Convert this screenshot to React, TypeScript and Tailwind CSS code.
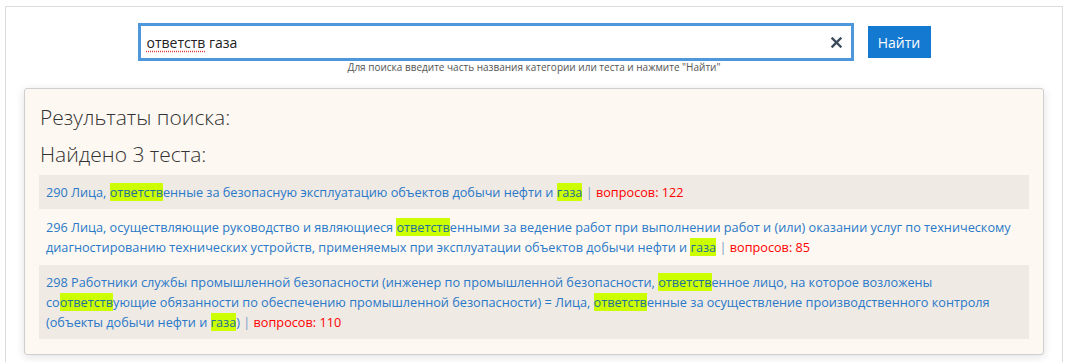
import React from "react";

const H = ({ children }: { children: React.ReactNode }) => (
  <span className="bg-[#ccff00] text-[#1f6f9a]">{children}</span>
);

const Count = ({ n }: { n: number }) => (
  <>
    {" "}
    <span className="text-[#7a9cc6]">|</span>{" "}
    <span className="text-[#ff0000]">вопросов: {n}</span>
  </>
);

export default function App() {
  return (
    <div
      className="h-[362px] overflow-hidden bg-white pl-[5px] pr-[5px] pt-[6px]"
      style={{ fontFamily: '"Open Sans", "Noto Sans", sans-serif' }}
    >
      <div className="h-full border-x border-t border-[#dcdcdc] bg-white">
        <div className="flex flex-col items-center pt-[16px]">
          <div className="flex items-center gap-[14px]">
            <div className="flex h-[38px] w-[716px] items-center justify-between border-[3px] border-[#4f97dc] bg-white pl-[6px] pr-[8px]">
              <span className="text-[14px] text-[#222]">
                <span className="underline decoration-[#e53935] decoration-dotted underline-offset-[3px]">
                  ответств
                </span>{" "}
                газа
              </span>
              <svg width="11" height="11" viewBox="0 0 11 11" className="mr-[1px]">
                <path d="M1.5 1.5 L9.5 9.5 M9.5 1.5 L1.5 9.5" stroke="#3c4b5c" strokeWidth="2.4" strokeLinecap="square" />
              </svg>
            </div>
            <button className="flex h-[32px] w-[63px] items-center justify-center bg-[#1479d1] text-[14px] text-white">
              Найти
            </button>
          </div>
          <div className="mt-[-1px] text-[10px] leading-[14px] text-[#555]">
            Для поиска введите часть названия категории или теста и нажмите "Найти"
          </div>
        </div>

        <div className="mx-[18px] mt-[14px] rounded-[3px] border border-[#cfcfcf] bg-[#fdf8f2] px-[14px] pb-[15px] pt-[15px] shadow-[0_2px_10px_rgba(0,0,0,0.12)]">
          <div className="pl-[1px] text-[21px] font-light leading-[26px] text-[#333]">Результаты поиска:</div>
          <div className="mt-[11px] pl-[1px] text-[21px] font-light leading-[26px] text-[#333]">Найдено 3 теста:</div>
          <div className="mt-[8px] text-[12.7px] leading-[20px] text-[#2a78c8]">
            <div className="bg-[#efeae4] px-[7px] py-[7px] whitespace-nowrap">
              290 Лица, <H>ответств</H>енные за безопасную эксплуатацию объектов добычи нефти и <H>газа</H>
              <Count n={122} />
            </div>
            <div className="px-[7px] py-[8px] whitespace-nowrap">
              296 Лица, осуществляющие руководство и являющиеся <H>ответств</H>енными за ведение работ при выполнении работ и (или) оказании услуг по техническому
              <br />
              диагностированию технических устройств, применяемых при эксплуатации объектов добычи нефти и <H>газа</H>
              <Count n={85} />
            </div>
            <div className="bg-[#efeae4] px-[7px] py-[7px] whitespace-nowrap">
              298 Работники службы промышленной безопасности (инженер по промышленной безопасности, <H>ответств</H>енное лицо, на которое возложены
              <br />
              со<H>ответств</H>ующие обязанности по обеспечению промышленной безопасности) = Лица, <H>ответств</H>енные за осуществление производственного контроля
              <br />
              (объекты добычи нефти и <H>газа</H>)
              <Count n={110} />
            </div>
          </div>
        </div>
      </div>
    </div>
  );
}
